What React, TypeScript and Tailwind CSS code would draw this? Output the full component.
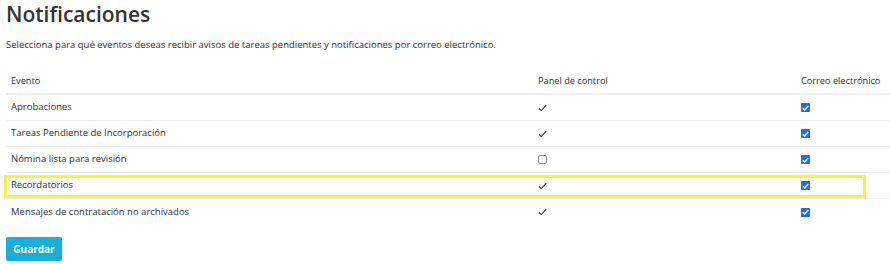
import React from "react";

const rows = [
  { name: "Aprobaciones", panel: true },
  { name: "Tareas Pendiente de Incorporación", panel: true },
  { name: "Nómina lista para revisión", panel: false },
  { name: "Recordatorios", panel: true, highlight: true },
  { name: "Mensajes de contratación no archivados", panel: true },
];

function Tick() {
  return (
    <svg width="9" height="8" viewBox="0 0 9 8" className="block">
      <path d="M1 4.5 L3.3 6.6 L8.3 1.2" fill="none" stroke="#333" strokeWidth="1.1" />
    </svg>
  );
}

function EmptyBox() {
  return <span className="block w-[9px] h-[9px] rounded-[2px] border border-[#8a8a8a] bg-white" />;
}

function BlueBox() {
  return (
    <span className="flex items-center justify-center w-[9px] h-[9px] rounded-[1px] bg-[#1a6ef5]">
      <svg width="7" height="6" viewBox="0 0 7 6">
        <path d="M0.8 3.2 L2.7 5 L6.2 1" fill="none" stroke="#fff" strokeWidth="1.5" />
      </svg>
    </span>
  );
}

export default function App() {
  return (
    <div className="w-[890px] h-[264px] bg-white pl-[6px] text-[#2f2f2f] font-['Open_Sans',sans-serif] overflow-hidden">
      <h1 className="text-[21px] leading-[26px] pt-[1px] font-semibold text-[#333]">Notificaciones</h1>
      <p className="mt-[10px] text-[9.5px] leading-[16px]">
        Selecciona para qué eventos deseas recibir avisos de tareas pendientes y notificaciones por correo electrónico.
      </p>
      <div className="mt-[15px]">
        <div className="grid grid-cols-[527px_263px_1fr] h-[27px] items-center border-b-2 border-[#eeeeee] text-[9.2px] font-medium">
          <div className="pl-[5px]">Evento</div>
          <div className="pl-[5px]">Panel de control</div>
          <div className="pl-[5px]">Correo electrónico</div>
        </div>
        {rows.map((r, i) => (
          <div
            key={r.name}
            className={`relative grid grid-cols-[527px_263px_1fr] h-[26px] items-center text-[9.5px] ${i < rows.length - 1 ? "border-b border-[#eeeeee]" : ""}`}
          >
            <div className="pl-[5px]">{r.name}</div>
            <div className="pl-[5px]">{r.panel ? <Tick /> : <EmptyBox />}</div>
            <div className="pl-[5px]">
              <BlueBox />
            </div>
            {r.highlight && (
              <span className="absolute left-[-2px] top-[2px] w-[862px] h-[23px] border-[3px] border-[#f7f23c] pointer-events-none" />
            )}
          </div>
        ))}
      </div>
      <button className="mt-[12px] w-[56px] h-[24px] rounded-[2px] bg-[#18b0d8] text-white text-[10px] font-bold">
        Guardar
      </button>
    </div>
  );
}
